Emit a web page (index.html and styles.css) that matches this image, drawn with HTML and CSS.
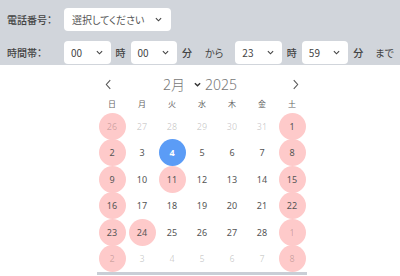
FILE: index.html
```html
<!DOCTYPE html>
<html lang="ja">
<head>
<meta charset="utf-8">
<link rel="stylesheet" href="styles.css">
</head>
<body>
<div class="form">
  <div class="row">
    <span class="label">電話番号：</span>
    <div class="select wide"><span>選択してください</span><svg class="chev" viewBox="0 0 8 5"><polyline points="1,1 4,4 7,1"/></svg></div>
  </div>
  <div class="row">
    <span class="label">時間帯：</span>
    <div class="select"><span>00</span><svg class="chev" viewBox="0 0 8 5"><polyline points="1,1 4,4 7,1"/></svg></div>
    <span class="unit">時</span>
    <div class="select"><span>00</span><svg class="chev" viewBox="0 0 8 5"><polyline points="1,1 4,4 7,1"/></svg></div>
    <span class="unit">分</span>
    <span class="sep">から</span>
    <div class="select"><span>23</span><svg class="chev" viewBox="0 0 8 5"><polyline points="1,1 4,4 7,1"/></svg></div>
    <span class="unit">時</span>
    <div class="select"><span>59</span><svg class="chev" viewBox="0 0 8 5"><polyline points="1,1 4,4 7,1"/></svg></div>
    <span class="unit">分</span>
    <span class="sep end">まで</span>
  </div>
</div>
<div class="cal">
  <div class="nav">
    <svg class="arrow" viewBox="0 0 8 12"><polyline points="6,1 1.5,6 6,11"/></svg>
    <div class="title"><span>2月</span><svg class="tchev" viewBox="0 0 8 5"><polyline points="1,1 4,4 7,1"/></svg><span>2025</span></div>
    <svg class="arrow" viewBox="0 0 8 12"><polyline points="2,1 6.5,6 2,11"/></svg>
  </div>
  <div class="week">
    <span>日</span><span>月</span><span>火</span><span>水</span><span>木</span><span>金</span><span>土</span>
  </div>
  <div class="days">
    <div class="c"><span class="d o h">26</span></div>
    <div class="c"><span class="d o">27</span></div>
    <div class="c"><span class="d o">28</span></div>
    <div class="c"><span class="d o">29</span></div>
    <div class="c"><span class="d o">30</span></div>
    <div class="c"><span class="d o">31</span></div>
    <div class="c"><span class="d h">1</span></div>

    <div class="c"><span class="d h">2</span></div>
    <div class="c"><span class="d">3</span></div>
    <div class="c"><span class="d sel">4</span></div>
    <div class="c"><span class="d">5</span></div>
    <div class="c"><span class="d">6</span></div>
    <div class="c"><span class="d">7</span></div>
    <div class="c"><span class="d h">8</span></div>

    <div class="c"><span class="d h">9</span></div>
    <div class="c"><span class="d">10</span></div>
    <div class="c"><span class="d h">11</span></div>
    <div class="c"><span class="d">12</span></div>
    <div class="c"><span class="d">13</span></div>
    <div class="c"><span class="d">14</span></div>
    <div class="c"><span class="d h">15</span></div>

    <div class="c"><span class="d h">16</span></div>
    <div class="c"><span class="d">17</span></div>
    <div class="c"><span class="d">18</span></div>
    <div class="c"><span class="d">19</span></div>
    <div class="c"><span class="d">20</span></div>
    <div class="c"><span class="d">21</span></div>
    <div class="c"><span class="d h">22</span></div>

    <div class="c"><span class="d h">23</span></div>
    <div class="c"><span class="d h">24</span></div>
    <div class="c"><span class="d">25</span></div>
    <div class="c"><span class="d">26</span></div>
    <div class="c"><span class="d">27</span></div>
    <div class="c"><span class="d">28</span></div>
    <div class="c"><span class="d o h">1</span></div>

    <div class="c"><span class="d o h">2</span></div>
    <div class="c"><span class="d o">3</span></div>
    <div class="c"><span class="d o">4</span></div>
    <div class="c"><span class="d o">5</span></div>
    <div class="c"><span class="d o">6</span></div>
    <div class="c"><span class="d o">7</span></div>
    <div class="c"><span class="d o h">8</span></div>
  </div>
  <div class="bar"></div>
</div>
</body>
</html>
```

FILE: styles.css
```css
html, body {
  margin: 0;
  padding: 0;
  background: #ffffff;
}
body {
  font-family: "Noto Sans CJK JP", "Noto Sans", sans-serif;
  font-feature-settings: "palt";
  color: #444;
  overflow: hidden;
}
.form {
  background: #d1d5db;
  height: 65px;
  box-sizing: border-box;
  padding: 8px 0 0 7px;
  display: flex;
  flex-direction: column;
  gap: 10px;
}
.row {
  display: flex;
  align-items: center;
  gap: 5px;
  height: 23px;
  font-size: 10px;
}
.label {
  width: 51px;
  margin-right: 1px;
  color: #444;
  font-weight: 500;
}
.select {
  width: 46.5px;
  height: 23px;
  box-sizing: border-box;
  background: #fff;
  border-radius: 4px;
  display: flex;
  align-items: center;
  justify-content: space-between;
  padding: 0 8px 0 7px;
  font-size: 10px;
  color: #444;
}
.select.wide {
  width: 107px;
  padding: 0 9px 0 8px;
  color: #555;
}
.chev {
  width: 7px;
  height: 5px;
  fill: none;
  stroke: #444;
  stroke-width: 1.3;
}
.unit {
  color: #444;
  font-weight: 500;
}
.sep {
  margin: 0 7px 0 8px;
  color: #444;
}
.sep.end {
  margin: 0 0 0 7px;
}
.cal {
  width: 210px;
  margin-left: 97px;
}
.nav {
  height: 26px;
  margin-top: 6px;
  display: flex;
  align-items: center;
  justify-content: space-between;
  padding: 0 8px 0 8px;
}
.arrow {
  width: 7px;
  height: 11px;
  fill: none;
  stroke: #555;
  stroke-width: 1.2;
}
.title {
  display: flex;
  align-items: center;
  font-family: "Noto Sans", "Noto Sans CJK JP", sans-serif;
  font-size: 14px;
  font-weight: 300;
  color: #777;
  margin-right: 4px;
}
.tchev {
  width: 7px;
  height: 5px;
  margin: 1px 4px 0 9px;
  fill: none;
  stroke: #333;
  stroke-width: 1.6;
}
.week {
  display: grid;
  grid-template-columns: repeat(7, 30px);
  height: 12px;
  align-items: center;
  justify-items: center;
  font-size: 8px;
  color: #666;
  margin-bottom: 4px;
}
.days {
  display: grid;
  grid-template-columns: repeat(7, 30px);
  grid-auto-rows: 26.5px;
}
.c {
  display: flex;
  align-items: center;
  justify-content: center;
}
.d {
  flex: none;
  width: 27px;
  height: 27px;
  border-radius: 50%;
  display: flex;
  align-items: center;
  justify-content: center;
  font-family: "Noto Sans", sans-serif;
  font-size: 9px;
  color: #555;
}
.d.h {
  background: #fecaca;
}
.d.o {
  color: rgba(0, 0, 0, 0.2);
}
.d.sel {
  background: #5b9cf6;
  color: #fff;
  font-weight: 700;
}
.bar {
  height: 3px;
  background: #c9ced6;
}
```
